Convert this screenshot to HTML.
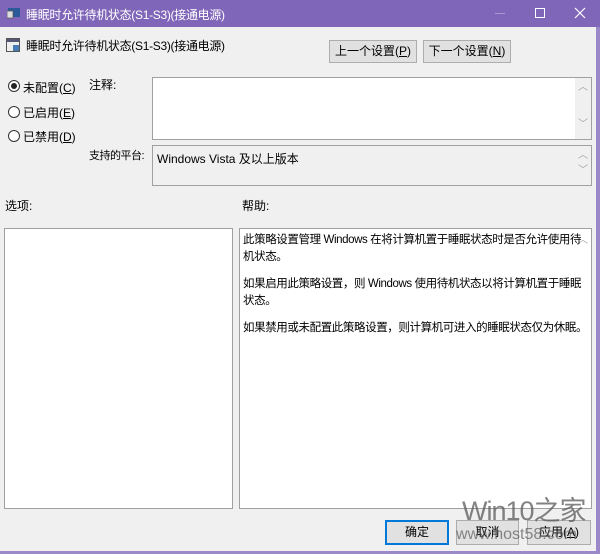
<!DOCTYPE html>
<html style="overflow:hidden"><head><meta charset="utf-8"><style>
*{margin:0;padding:0;box-sizing:border-box}
html,body{width:600px;height:554px;overflow:hidden}
body{background:#f0f0f0;font-family:"Liberation Sans","Noto Sans CJK SC",sans-serif;font-size:12px;color:#000;position:relative;white-space:nowrap}
.a{position:absolute}
.title{left:0;top:0;width:600px;height:27px;background:#8066b8;color:#fff}
.btn{position:absolute;background:#e1e1e1;border:1px solid #adadad;text-align:center;line-height:20px;font-size:12px}
.box{position:absolute;border:1px solid #a0a0a0;background:#fff}
.radio{position:absolute;width:12px;height:12px;border:1px solid #333;border-radius:50%;background:#fff}
.sb{position:absolute;right:0;top:0;bottom:0;width:16px;background:#f0f0f0;color:#a0a0a0;font-size:10px;text-align:center}
p{margin-bottom:11px}
</style></head><body>
<div class="a title">
 <svg class="a" style="left:7px;top:7px" width="14" height="12"><rect x="1" y="1" width="12" height="9" fill="#2a5a9a"/><rect x="0" y="4" width="6" height="7" fill="#ddd" stroke="#555" stroke-width="0.7"/></svg>
 <div class="a" style="left:26px;top:6px;font-size:12px;letter-spacing:-0.3px">睡眠时允许待机状态(S1-S3)(接通电源)</div>
 <div class="a" style="left:495px;top:13px;width:10px;height:1px;background:#a897d0"></div>
 <div class="a" style="left:535px;top:8px;width:10px;height:10px;border:1px solid #fff"></div>
 <svg class="a" style="left:574px;top:7px" width="12" height="12"><path d="M1 1L11 11M11 1L1 11" stroke="#fff" stroke-width="1.2"/></svg>
</div>
<div class="a" style="left:596px;top:27px;width:4px;height:527px;background:#9a88c8"></div>
<div class="a" style="left:0;top:551px;width:600px;height:3px;background:#9a88c8"></div>
<svg class="a" style="left:6px;top:38px" width="14" height="14"><rect x="0.5" y="0.5" width="13" height="13" fill="#eee" stroke="#555"/><rect x="1" y="1" width="12" height="3" fill="#557"/><rect x="7" y="7" width="6" height="6" fill="#4a7ab8"/></svg>
<div class="a" style="left:26px;top:37px;letter-spacing:-0.3px">睡眠时允许待机状态(S1-S3)(接通电源)</div>
<div class="btn" style="left:329px;top:40px;width:88px;height:23px">上一个设置(<u>P</u>)</div>
<div class="btn" style="left:423px;top:40px;width:88px;height:23px">下一个设置(<u>N</u>)</div>
<div class="radio" style="left:8px;top:80px"><div class="a" style="left:2px;top:2px;width:6px;height:6px;border-radius:50%;background:#222"></div></div>
<div class="a" style="left:23px;top:79px">未配置(<u>C</u>)</div>
<div class="radio" style="left:8px;top:106px"></div>
<div class="a" style="left:23px;top:104px">已启用(<u>E</u>)</div>
<div class="radio" style="left:8px;top:130px"></div>
<div class="a" style="left:23px;top:128px">已禁用(<u>D</u>)</div>
<div class="a" style="left:89px;top:76px">注释:</div>
<div class="box" style="left:152px;top:77px;width:440px;height:63px"><div class="sb">︿<br><br><br>﹀</div></div>
<div class="a" style="left:89px;top:147px;font-size:11px;letter-spacing:-0.5px">支持的平台:</div>
<div class="box" style="left:152px;top:145px;width:440px;height:41px;background:#f0f0f0"><div class="a" style="left:4px;top:4px">Windows Vista 及以上版本</div><div class="sb">︿<br>﹀</div></div>
<div class="a" style="left:5px;top:197px">选项:</div>
<div class="a" style="left:242px;top:197px">帮助:</div>
<div class="box" style="left:4px;top:228px;width:229px;height:281px"></div>
<div class="box" style="left:239px;top:228px;width:353px;height:281px">
 <div class="a" style="right:0;top:2px;width:16px;text-align:center;color:#a0a0a0;font-size:10px">︿</div>
 <div class="a" style="left:3px;top:3px;width:342px;line-height:16.5px;font-size:11.5px;letter-spacing:-0.4px;white-space:normal"><p>此策略设置管理 Windows 在将计算机置于睡眠状态时是否允许使用待机状态。</p><p>如果启用此策略设置，则 Windows 使用待机状态以将计算机置于睡眠状态。</p><p style="white-space:nowrap">如果禁用或未配置此策略设置，则计算机可进入的睡眠状态仅为休眠。</p></div>
</div>
<div class="btn" style="left:385px;top:520px;width:64px;height:25px;border:2px solid #0078d7;line-height:21px">确定</div>
<div class="btn" style="left:456px;top:520px;width:63px;height:25px;line-height:23px">取消</div>
<div class="btn" style="left:527px;top:520px;width:64px;height:25px;line-height:23px">应用(<u>A</u>)</div>
<div class="a" style="left:462px;top:496px;font-size:27px;line-height:30px;color:rgba(90,90,90,0.75);letter-spacing:-1px">Win10之家</div>
<div class="a" style="left:456px;top:525px;font-size:16px;line-height:20px;color:rgba(90,90,90,0.7)">www.host58.com</div>
</body></html>
